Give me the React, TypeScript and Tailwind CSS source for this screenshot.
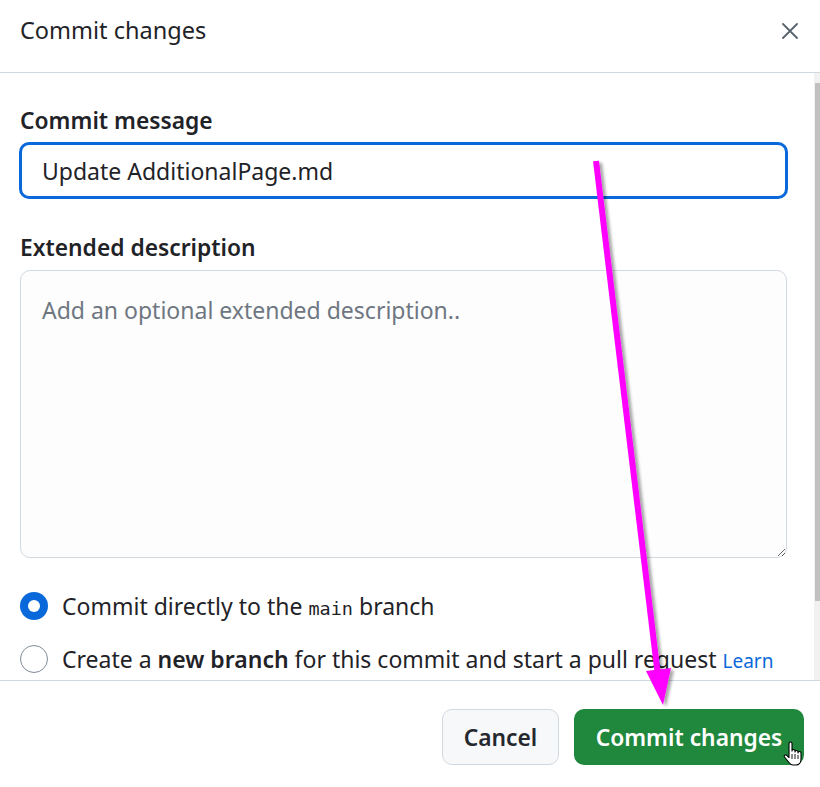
import React from "react";

const font = { fontFamily: '"Noto Sans", "Segoe UI", sans-serif' };

export default function App() {
  return (
    <div
      className="relative w-[820px] h-[787px] bg-white overflow-hidden flex flex-col text-[#1f2328]"
      style={font}
    >
      {/* Header */}
      <div className="h-[73px] shrink-0 flex items-start justify-between pl-5 pr-[22px] pt-[13px] border-b border-[#d1d9e0]">
        <div className="text-[23.5px] leading-[34px] font-normal">Commit changes</div>
        <button className="mt-[10px] text-[#59636e]">
          <svg width="16" height="16" viewBox="0 0 16 16">
            <path d="M1 1 L15 15 M15 1 L1 15" stroke="#59636e" strokeWidth="1.8" strokeLinecap="round" />
          </svg>
        </button>
      </div>

      {/* Body */}
      <div className="flex flex-row h-[607px] shrink-0 overflow-hidden">
        <div className="flex-1 pl-5 pr-[26px] pt-[33px] flex flex-col">
          <label className="text-[22.8px] leading-[30px] font-semibold">Commit message</label>
          <input
            readOnly
            value="Update AdditionalPage.md"
            className="mt-[6px] -ml-px h-[57px] w-[769px] rounded-[10px] border-[3px] border-[#0969da] px-[20px] text-[23px] text-[#1f2328] outline-none"
            style={font}
          />
          <label className="mt-[34px] text-[22.8px] leading-[30px] font-semibold">Extended description</label>
          <textarea
            placeholder="Add an optional extended description.."
            className="mt-[7px] h-[288px] w-[767px] rounded-[10px] border border-[#d1d9e0] bg-[#fdfdfe] px-[21px] py-[24px] text-[23px] leading-[30px] text-[#1f2328] placeholder:text-[#6e7781] outline-none"
            style={font}
          />
          <div className="mt-[33px] flex flex-col gap-[23px]">
            <div className="flex items-center h-[30px]">
              <span className="w-[28px] h-[28px] rounded-full bg-[#0969da] flex items-center justify-center shrink-0">
                <span className="w-[12px] h-[12px] rounded-full bg-white" />
              </span>
              <span className="ml-[14px] pt-[2px] text-[23px] leading-[30px] whitespace-nowrap">
                Commit directly to the{" "}
                <code className="text-[18.5px]" style={{ fontFamily: '"DejaVu Sans Mono", "Liberation Mono", monospace' }}>
                  main
                </code>{" "}
                branch
              </span>
            </div>
            <div className="flex items-center h-[30px]">
              <span className="w-[28px] h-[28px] rounded-full border-[1.5px] border-[#818b98] bg-white shrink-0" />
              <span className="ml-[14px] pt-[1px] text-[23px] leading-[30px] whitespace-nowrap">
                Create a <span className="font-semibold">new branch</span> for this commit and start a pull request{" "}
                <span className="text-[19px] text-[#0969da]">Learn</span>
              </span>
            </div>
          </div>
        </div>
        {/* Scrollbar */}
        <div className="w-[6px] shrink-0 bg-[#f1f1f1] pt-[10px]">
          <div className="h-[518px] w-[5px] ml-[1px] bg-[#c1c1c1]" />
        </div>
      </div>

      {/* Footer */}
      <div className="flex-1 border-t border-[#d1d9e0] flex justify-end items-start pt-[28px] pr-[16px] gap-[15px]">
        <button className="h-[56px] w-[117px] pt-[3px] rounded-[10px] border border-[#d1d9e0] bg-[#f6f8fa] text-[22.8px] font-semibold text-[#25292e]">
          Cancel
        </button>
        <button className="h-[56px] w-[230px] pt-[3px] rounded-[10px] bg-[#1f883d] text-[22.8px] font-semibold text-white">
          Commit changes
        </button>
      </div>

      {/* Annotation arrow overlay */}
      <svg className="absolute inset-0 pointer-events-none" width="820" height="787" viewBox="0 0 820 787">
        <defs>
          <filter id="sh" x="-20%" y="-5%" width="140%" height="110%">
            <feDropShadow dx="3" dy="2" stdDeviation="1.5" floodColor="#000" floodOpacity="0.35" />
          </filter>
        </defs>
        <g filter="url(#sh)">
          <line x1="596" y1="161" x2="658" y2="676" stroke="#ff00ff" strokeWidth="6" />
          <polygon points="646,671 671,668 663,705" fill="#ff00ff" />
        </g>
      </svg>

      {/* Hand cursor */}
      <svg className="absolute left-[783px] top-[741px] pointer-events-none" width="19" height="26" viewBox="0 0 19 26">
        <path
          d="M6 2.5 a1.5 1.5 0 0 1 3 0 V10 a1.5 1.5 0 0 1 3 0 v1 a1.5 1.5 0 0 1 3 0 v1 a1.5 1.5 0 0 1 3 0 V18 c0 3.5 -2 6 -5 6 h-3 c-2 0 -3 -1 -4 -2.5 L1.5 16 a1.4 1.4 0 0 1 2.2 -1.7 L6 16.5 Z"
          fill="white"
          stroke="black"
          strokeWidth="1.1"
          strokeLinejoin="round"
        />
        <path d="M9 13 v5 M12 13 v5 M15 14 v4" stroke="black" strokeWidth="0.9" />
      </svg>
    </div>
  );
}
